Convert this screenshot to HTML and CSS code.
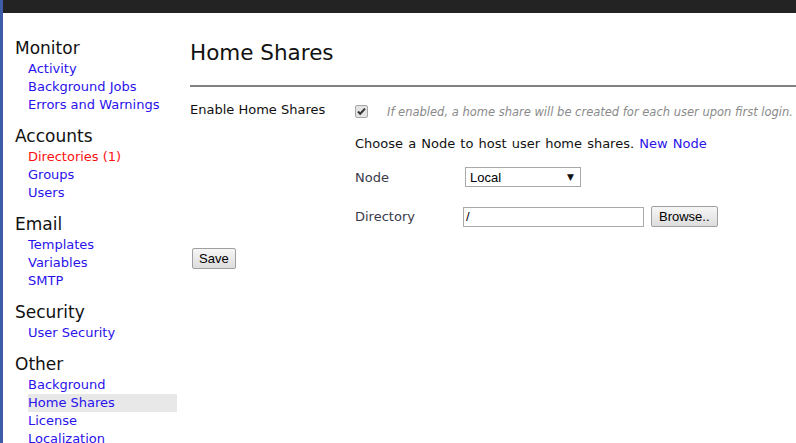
FILE: index.html
```html
<!DOCTYPE html>
<html>
<head>
  <title>Home Shares</title>
  <link rel="stylesheet" href="styles.css">
</head>
<body>
  <div class="topbar"></div>
  <div class="page">
    <div class="sidebar">
      <div class="nav-group">
        <h3>Monitor</h3>
        <a href="#">Activity</a>
        <a href="#">Background Jobs</a>
        <a href="#">Errors and Warnings</a>
      </div>
      <div class="nav-group">
        <h3>Accounts</h3>
        <a href="#" class="alert">Directories (1)</a>
        <a href="#">Groups</a>
        <a href="#">Users</a>
      </div>
      <div class="nav-group">
        <h3>Email</h3>
        <a href="#">Templates</a>
        <a href="#">Variables</a>
        <a href="#">SMTP</a>
      </div>
      <div class="nav-group">
        <h3>Security</h3>
        <a href="#">User Security</a>
      </div>
      <div class="nav-group">
        <h3>Other</h3>
        <a href="#">Background</a>
        <a href="#" class="active">Home Shares</a>
        <a href="#">License</a>
        <a href="#">Localization</a>
      </div>
    </div>
    <div class="main">
      <h1>Home Shares</h1>
      <hr>
      <div class="row">
        <div class="label">Enable Home Shares</div>
        <div class="fields">
          <div class="enable">
            <span class="checkbox">
              <svg width="13" height="13" viewBox="0 0 13 13">
                <rect x="0.5" y="0.5" width="12" height="12" rx="1.5" fill="#e4e4e4" stroke="#a6a6a6"/>
                <path d="M3 6.5 L5.2 8.8 L10 3.6" fill="none" stroke="#333" stroke-width="2"/>
              </svg>
            </span>
            <span class="hint">If enabled, a home share will be created for each user upon first login.</span>
          </div>
          <p class="choose">Choose a Node to host user home shares. <a href="#">New Node</a></p>
          <div class="field">
            <span class="field-label">Node</span>
            <div class="select-wrap">
              <select class="node-select">
                <option>Local</option>
              </select>
              <span class="select-arrow">&#9660;</span>
            </div>
          </div>
          <div class="field">
            <span class="field-label">Directory</span>
            <input type="text" class="dir-input" value="/">
            <button class="btn">Browse..</button>
          </div>
        </div>
      </div>
      <button class="btn save">Save</button>
    </div>
  </div>
</body>
</html>
```

FILE: styles.css
```css
:root {
  --link: #2a12ec;
  --alert: #ff1010;
  --muted: #8a8a8a;
  --text: #111;
}

body {
  margin: 0;
  font-family: "DejaVu Sans", Verdana, sans-serif;
  font-size: 13px;
  color: var(--text);
  background: #fff;
  border-left: 3px solid #3d5ea6;
  min-height: 443px;
  box-sizing: border-box;
  overflow: hidden;
}

.topbar {
  height: 13px;
  background-color: #232323;
}

.page {
  display: flex;
}

.sidebar {
  width: 162px;
  padding-left: 12px;
  padding-top: 25px;
  flex-shrink: 0;
}

.nav-group {
  display: flex;
  flex-direction: column;
  margin-bottom: 12px;
}

.nav-group h3 {
  margin: 0 0 2px 0;
  font-size: 17px;
  font-weight: normal;
  line-height: 20px;
}

.nav-group a {
  color: var(--link);
  text-decoration: none;
  line-height: 18px;
  margin-left: 13px;
}

.nav-group a.alert {
  color: var(--alert);
}

.nav-group a.active {
  background-color: #e8e8e8;
}

.main {
  flex: 1;
  margin-left: 13px;
  padding-top: 25px;
}

.main h1 {
  margin: 0;
  font-size: 21.5px;
  font-weight: normal;
  line-height: 30px;
}

.main hr {
  border: 0;
  border-top: 2px solid #828282;
  margin: 17px 0 16px 0;
}

.row {
  display: flex;
}

.label {
  width: 165px;
  flex-shrink: 0;
  line-height: 18px;
  margin-top: -2px;
}

.fields {
  flex: 1;
}

.enable {
  display: flex;
  align-items: center;
  height: 18px;
}

.checkbox {
  display: flex;
  width: 13px;
  height: 13px;
  margin-top: -2px;
}

.hint {
  font-style: italic;
  font-size: 11.5px;
  color: var(--muted);
  margin-left: 19px;
  white-space: nowrap;
}

.choose {
  margin: 14px 0 0 0;
  line-height: 18px;
  word-spacing: 1px;
}

.choose a {
  color: var(--link);
  text-decoration: none;
}

.field {
  display: flex;
  align-items: center;
  margin-top: 14px;
}

.field + .field {
  margin-top: 19px;
}

.field-label {
  width: 108px;
  color: #3a3a4a;
}

.select-wrap {
  position: relative;
  margin-left: 2px;
}

.node-select {
  appearance: none;
  -webkit-appearance: none;
  display: block;
  width: 116px;
  height: 20px;
  padding: 0 4px;
  font-family: "Liberation Sans", Arial, sans-serif;
  font-size: 13px;
  color: #000;
  border: 1px solid #a9a9a9;
  border-radius: 0;
  background: #fff;
}

.select-arrow {
  position: absolute;
  right: 7px;
  top: 4px;
  font-size: 9px;
  line-height: 12px;
  color: #111;
  pointer-events: none;
}

.dir-input {
  width: 175px;
  height: 16px;
  padding: 1px 2px;
  border: 1px solid #a9a9a9;
  font-family: "Liberation Sans", Arial, sans-serif;
  font-size: 13px;
}

.btn {
  font-family: "Liberation Sans", Arial, sans-serif;
  font-size: 13px;
  color: #000;
  background: linear-gradient(#f6f6f6, #dddddd);
  border: 1px solid #a0a0a0;
  border-radius: 2px;
  padding: 1px 7px;
  height: 21px;
}

.dir-input + .btn {
  margin-left: 7px;
}

.save {
  margin: 21px 0 0 2px;
  padding: 1px 6px;
}
```
